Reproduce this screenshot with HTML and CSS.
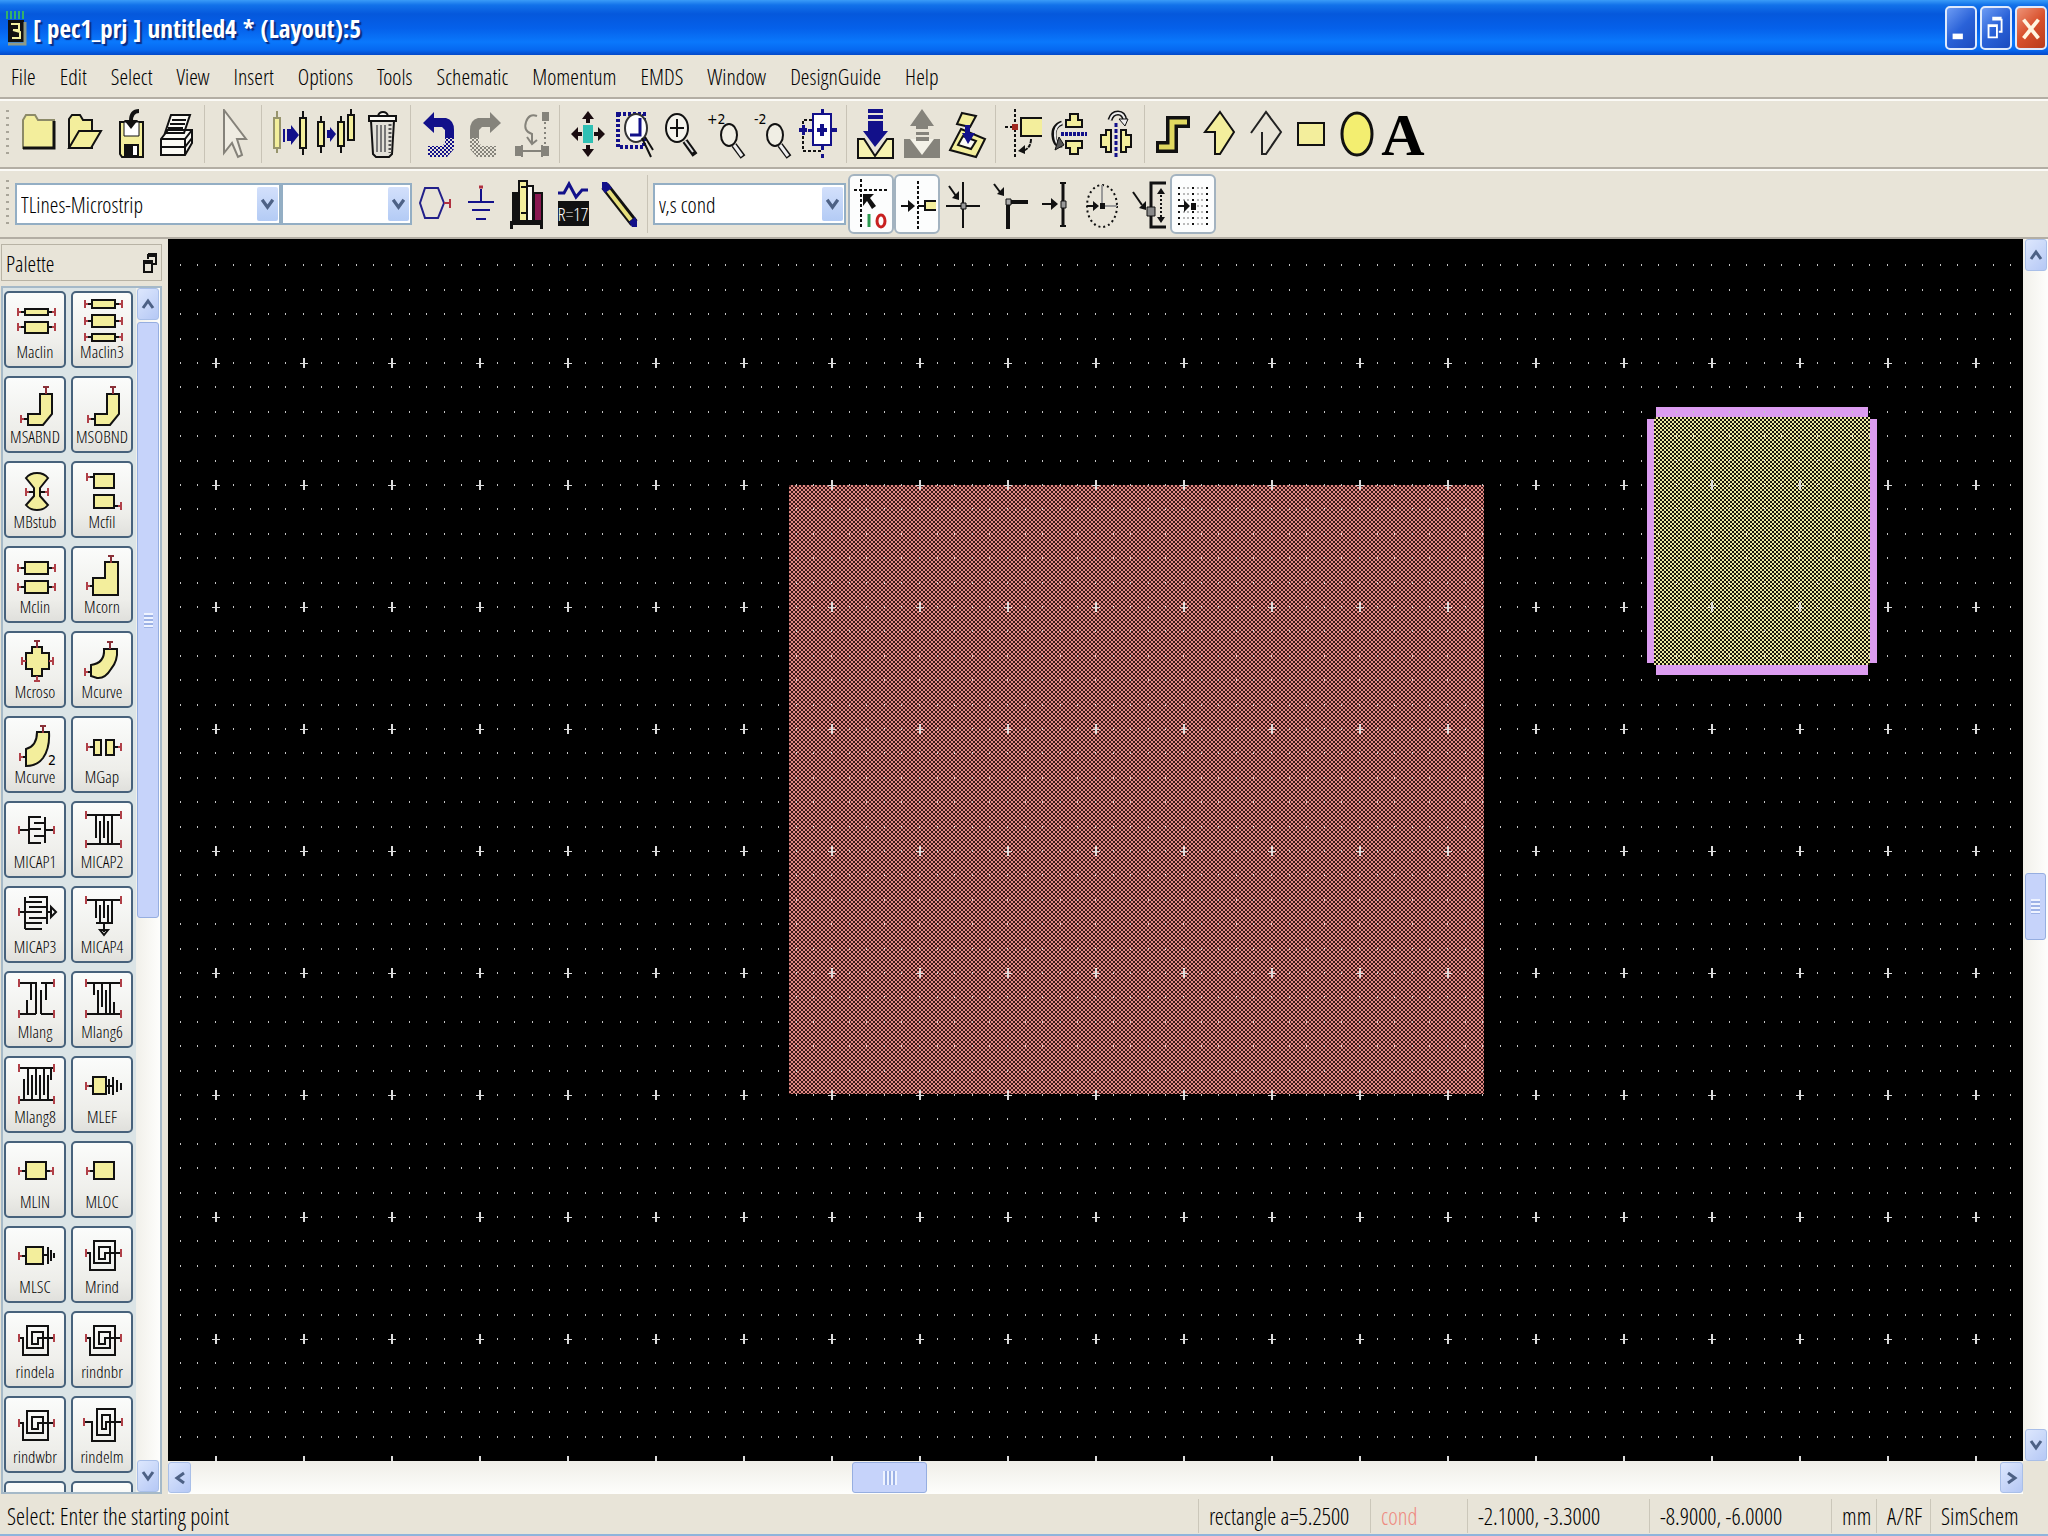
FILE: index.html
```html
<!DOCTYPE html>
<html lang="en">
<head>
    <meta charset="UTF-8">
    <meta name="viewport" content="width=device-width, initial-scale=1.0">
    <title>[ pec1_prj ] untitled4 * (Layout):5</title>
    <link rel="stylesheet" href="styles.css">
</head>
<body>
    <!-- shared symbols -->
    <svg class="defs" aria-hidden="true">
        <defs>
            <pattern id="navyDither" width="4" height="4" patternUnits="userSpaceOnUse"><path d="M0 0h2v2h-2zM2 2h2v2h-2z" fill="#12108a"/></pattern>
            <pattern id="grayDither" width="4" height="4" patternUnits="userSpaceOnUse"><path d="M0 0h2v2h-2zM2 2h2v2h-2z" fill="#85837b"/></pattern>
            <symbol id="portL" viewBox="0 0 8 8"><path d="M1 0v8M1 4h3" stroke="#b04048" stroke-width="2"/><path d="M4 4h4" stroke="#111" stroke-width="2"/></symbol>
            <symbol id="portR" viewBox="0 0 8 8"><path d="M7 0v8M7 4h-3" stroke="#b04048" stroke-width="2"/><path d="M4 4h-4" stroke="#111" stroke-width="2"/></symbol>
            <symbol id="portT" viewBox="0 0 8 8"><path d="M1 1h6M4 1v7" stroke="#8a3038" stroke-width="2" fill="none"/></symbol>
            <symbol id="chevron" viewBox="0 0 14 14"><path d="M2 3l5 7 5-7" fill="none" stroke="#4d6185" stroke-width="3"/></symbol>
            <symbol id="bend" viewBox="0 0 61 50"><path class="y" d="M35 17h12v20l-9 11H23V37h12z"/><use href="#portT" x="37" y="9" width="8" height="8"/><use href="#portL" x="15" y="38" width="8" height="8"/></symbol>
            <symbol id="spiral" viewBox="0 0 61 50"><path class="l" d="M14 26h4v17h25V14H22v22h16V20H27v12h6v-6h16"/><path class="r" d="M14 22v8M49 22v8"/></symbol>
        </defs>
    </svg>

    <header class="title-bar">
        <svg class="app-icon" width="22" height="40" viewBox="0 0 22 40"><path d="M2 3v8M6 3v8M10 3v8M14 3v8M18 3v8" stroke="#35b06a" stroke-width="2"/><rect x="3" y="12" width="16" height="22" fill="#111"/><path d="M6 16h8v6H8M8 22l7 2v6H7" fill="none" stroke="#f2f0a0" stroke-width="2"/><path d="M3 36h17V14" fill="none" stroke="#8f9a86" stroke-width="3"/></svg>
        <h1>[ pec1_prj ] untitled4 * (Layout):5</h1>
        <div class="window-btns">
            <button class="win-btn" aria-label="Minimize"><svg width="30" height="42" viewBox="0 0 30 42"><path d="M6 27h11v6H6z" fill="#fff"/></svg></button>
            <button class="win-btn" aria-label="Restore"><svg width="30" height="42" viewBox="0 0 30 42"><path d="M11 12h10v13h-3M11 10h10M7 19h9v12H7zM6 18h11" fill="none" stroke="#fff" stroke-width="2"/></svg></button>
            <button class="win-btn win-close" aria-label="Close"><svg width="30" height="42" viewBox="0 0 30 42"><path d="M7 12l16 20M23 12L7 32" stroke="#fff5e0" stroke-width="4"/></svg></button>
        </div>
    </header>

    <nav class="menu-bar">
        <a href="#">File</a>
        <a href="#">Edit</a>
        <a href="#">Select</a>
        <a href="#">View</a>
        <a href="#">Insert</a>
        <a href="#">Options</a>
        <a href="#">Tools</a>
        <a href="#">Schematic</a>
        <a href="#">Momentum</a>
        <a href="#">EMDS</a>
        <a href="#">Window</a>
        <a href="#">DesignGuide</a>
        <a href="#">Help</a>
    </nav>

    <!-- main toolbar -->
    <div class="toolbar">
        <span class="handle"></span>
        <button class="tool" aria-label="New"><svg viewBox="0 0 46 50"><path d="M8 39V11l3-5h9l3 5h16v28z" fill="#f3ee9c" stroke="#8c8a68" stroke-width="2"/><path d="M8 39h31V12" fill="none" stroke="#111" stroke-width="3"/></svg></button>
        <button class="tool" aria-label="Open"><svg viewBox="0 0 46 50"><path class="y" d="M8 38V10l3-4h8l3 5h9v28H8z"/><path class="y" d="M8 39l10-17h22L30 39z"/></svg></button>
        <button class="tool" aria-label="Save"><svg viewBox="0 0 46 50"><path class="y" d="M13 13h23v35H15l-2-3z"/><path d="M17 13h15v14H17z" fill="#fff" stroke="#111"/><path d="M17 35h15v12H17z" fill="#111"/><path d="M26 37h4v9h-4z" fill="#fff"/><path d="M32 2q-8 0-8 10" fill="none" stroke="#111" stroke-width="4"/><path d="M17 11h14l-7 9z" fill="#111"/></svg></button>
        <button class="tool" aria-label="Print"><svg viewBox="0 0 46 50"><path class="w" d="M8 30l7-9h24v13l-7 12H8zM18 6h19l-6 18H12z"/><path class="l" d="M19 11h14M17 15h15M15 19h15M8 30h24l7-9M32 30v16M8 38h24l7-9"/></svg></button>
        <span class="sep"></span>
        <button class="tool" aria-label="Pointer"><svg viewBox="0 0 46 50"><path d="M14 1l22 29h-9l5 16-4 2-6-14-8 10z" fill="#efece2" stroke="#85827a" stroke-width="2"/></svg></button>
        <span class="sep"></span>
        <button class="tool" aria-label="Copy"><svg viewBox="0 0 46 50"><path d="M10 2v42" stroke="#97946c" stroke-width="2"/><path d="M7 9h6v30H7z" fill="#f3ee9c" stroke="#97946c" stroke-width="2"/><path d="M36 2v44" class="l"/><path class="y" d="M33 9h6v30h-6z"/><path class="n" d="M16 20h2v13h-2zM20 20h4v-4l8 10-8 10v-4h-4z"/></svg></button>
        <button class="tool" aria-label="Copy multiple"><svg viewBox="0 0 46 50"><path class="l" d="M8 7v37M28 7v37M38 0v32"/><path class="y" d="M5 13h6v24H5zM25 13h6v24h-6zM35 6h6v25h-6z"/><path class="n" d="M14 21h3v-3l6 7-6 8v-4h-3z"/></svg></button>
        <button class="tool" aria-label="Delete"><svg viewBox="0 0 46 50"><path d="M12 12h23l-2 33-3 3H17l-3-3z" fill="#e2e0d8" stroke="#111" stroke-width="2"/><path class="w" d="M10 7h27v5H10zM19 7q1-4 5-4t5 4"/><path d="M18 16v27M22 16v27M26 16v27" stroke="#777" stroke-width="2"/><path d="M31 15v29" stroke="#555" stroke-width="3" stroke-dasharray="2"/></svg></button>
        <span class="sep"></span>
        <button class="tool" aria-label="Undo"><svg viewBox="0 0 46 50"><path class="n" d="M7 14L18 3v6h12q8 2 8 12v8h-9v-8l-3-3h-8v6z"/><path d="M29 28h9v12l-7 8H12V37h14l3-3z" fill="url(#navyDither)"/></svg></button>
        <button class="tool" aria-label="Redo"><svg viewBox="0 0 46 50"><path d="M39 14L28 3v6H16q-8 2-8 12v8h9v-8l3-3h8v6z" fill="#85837b"/><path d="M17 28H8v12l7 8h19V37H20l-3-3z" fill="url(#grayDither)"/></svg></button>
        <button class="tool" aria-label="Edit vertex"><svg viewBox="0 0 46 50"><g fill="none" stroke="#85837b" stroke-width="2"><path d="M14 42h20M14 36v12M34 36v12"/><path d="M37 13v24" stroke-dasharray="2 3"/><path d="M29 7q-8-3-11 6t6 12v9M19 28l5 7 5-4"/></g><path d="M34 3h7v9h-7zM7 37h7v10H7zM34 37h7v10h-7z" fill="#85837b"/></svg></button>
        <span class="sep"></span>
        <button class="tool" aria-label="Pan"><svg viewBox="0 0 46 50"><path d="M18 16h10v18H18z" fill="#2fc0b4"/><path d="M23 2l6 8h-4v4h-4v-4h-4zM23 48l6-8h-4v-4h-4v4h-4zM6 25l7-7v5h4v4h-4v5zM40 25l-7-7v5h-4v4h4v5z" fill="#1a0c10"/></svg></button>
        <button class="tool" aria-label="Zoom area"><svg viewBox="0 0 46 50"><path d="M7 5h26v33H7z" fill="none" stroke="#12108a" stroke-width="4" stroke-dasharray="3 2"/><ellipse cx="25" cy="19" rx="11" ry="14" fill="#fff" stroke="#333" stroke-width="2"/><path d="M19 26h10V9" fill="none" stroke="#12108a" stroke-width="3"/><path d="M31 29l9 19M34 28l8 13" class="l"/></svg></button>
        <button class="tool" aria-label="Zoom in"><svg viewBox="0 0 46 50"><path d="M28 32l10 14" stroke="#111" stroke-width="6"/><path d="M28 32l8 11" stroke="#ddd" stroke-width="2"/><ellipse cx="20" cy="19" rx="11" ry="14" fill="#f4f3ec" stroke="#111" stroke-width="2"/><path class="l" d="M13 19h14M20 10v18"/></svg></button>
        <button class="tool" aria-label="Zoom in 2x"><svg viewBox="0 0 46 50"><path d="M31 36l9 12" stroke="#111" stroke-width="6"/><path d="M31 36l8 11" stroke="#eee" stroke-width="3"/><ellipse cx="26" cy="26" rx="8" ry="11" fill="#f0eee4" stroke="#111" stroke-width="2"/><text x="4" y="15" class="t">+2</text></svg></button>
        <button class="tool" aria-label="Zoom out 2x"><svg viewBox="0 0 46 50"><path d="M31 36l9 12" stroke="#111" stroke-width="6"/><path d="M31 36l8 11" stroke="#eee" stroke-width="3"/><ellipse cx="26" cy="26" rx="8" ry="11" fill="#f0eee4" stroke="#111" stroke-width="2"/><text x="5" y="15" class="t">-2</text></svg></button>
        <button class="tool" aria-label="Center view"><svg viewBox="0 0 46 50"><path d="M17 11H8v31h19" fill="none" stroke="#111" stroke-width="2" stroke-dasharray="3 2"/><path d="M18 5h18v31H18z" fill="#fff" stroke="#12108a" stroke-width="2"/><path class="n" d="M26 0h3v5h-3zM26 37h3v4h-3zM26 45h3v4h-3zM4 19h8v4H4zM7 16h3v10H7zM13 20h4v3h-4zM36 19h6v4h-6zM22 19h10v4H22zM25 15h4v12h-4z"/></svg></button>
        <span class="sep"></span>
        <button class="tool" aria-label="Push into hierarchy"><svg viewBox="0 0 46 50"><path d="M6 30h6l11 17 12-17h6v19H6z" fill="#f6f2b0" stroke="#111" stroke-width="2"/><path class="n" d="M16 0h15v4H16zM16 6h15v4H16zM16 12h15v10h5L23 38 11 22h5z"/></svg></button>
        <button class="tool" aria-label="Pop out of hierarchy"><svg viewBox="0 0 46 50"><path d="M6 30h36v19H6z" fill="#85837b"/><path d="M12 30h24L24 46z" fill="#f4f2e8"/><path d="M24 0l12 17h-6v3H18v-3h-6zM18 23h13v3H18zM18 28h13v4H18z" fill="#85837b"/></svg></button>
        <button class="tool" aria-label="Insert component"><svg viewBox="0 0 46 50"><path class="y" d="M17 20l24 10-9 18L6 41z"/><path class="w" d="M19 27l13 5-5 8-13-4z"/><path class="y" d="M18 4l14 3-6 11-13-3z"/><path class="n" d="M21 16h5v8h5l-7 11-6-11h3z"/></svg></button>
        <span class="sep"></span>
        <button class="tool" aria-label="Rotate"><svg viewBox="0 0 46 50"><path d="M14 0v49M4 18h9" fill="none" stroke="#111" stroke-width="2" stroke-dasharray="3 2"/><path d="M20 9h21v18H20z" fill="#f3ee9c"/><path class="l" d="M41 9H20v18h21"/><path d="M11 15h6v6h-6z" fill="#a02820"/><path d="M30 30q0 9-8 12" fill="none" stroke="#111" stroke-width="2" stroke-dasharray="4 1"/><path d="M17 42l7-6v9z" fill="#111"/></svg></button>
        <button class="tool" aria-label="Mirror X"><svg viewBox="0 0 46 50"><path class="y" d="M19 18v-7h4V5h8v6h4v7zM19 32v7h4v6h8v-6h4v-7z"/><path d="M14 25h26" stroke="#12108a" stroke-width="4" stroke-dasharray="3 1"/><path d="M15 14q-9 3-8 13t8 9" fill="none" stroke="#111" stroke-width="5"/><path d="M15 14q-8 3-7 13t5 7" fill="none" stroke="#eee" stroke-width="2"/><path d="M8 41l9-5-5-8z" fill="#555" stroke="#111"/></svg></button>
        <button class="tool" aria-label="Mirror Y"><svg viewBox="0 0 46 50"><path class="y" d="M18 21h-5v5H8v12h5v5h5zM28 21h5v5h5v12h-5v5h-5z"/><path d="M23 14v35" stroke="#12108a" stroke-width="3" stroke-dasharray="4 2"/><path d="M17 11q2-7 8-7t7 8" fill="none" stroke="#111" stroke-width="5"/><path d="M17 11q2-7 8-7t7 8" fill="none" stroke="#eee" stroke-width="2"/><path d="M26 10h9l-3 7z" fill="#eee" stroke="#111"/></svg></button>
        <span class="sep"></span>
        <button class="tool" aria-label="Insert path"><svg viewBox="0 0 46 50"><path d="M6 38h16V13h18" fill="none" stroke="#111" stroke-width="12"/><path d="M9 38h13V13h15" fill="none" stroke="#e0d860" stroke-width="5"/></svg></button>
        <button class="tool" aria-label="Insert polygon"><svg viewBox="0 0 46 50"><path class="y" d="M24 3l14 20-14 22h-5V23H9z"/></svg></button>
        <button class="tool" aria-label="Insert polyline"><svg viewBox="0 0 46 50"><path d="M9 24L24 3l15 20-15 22h-4V23" fill="none" stroke="#222" stroke-width="2"/></svg></button>
        <button class="tool" aria-label="Insert rectangle"><svg viewBox="0 0 46 50"><path class="y" d="M10 14h26v22H10z"/></svg></button>
        <button class="tool" aria-label="Insert circle"><svg viewBox="0 0 46 50"><ellipse cx="23" cy="25" rx="15" ry="21" fill="#f3ee70" stroke="#111" stroke-width="3"/></svg></button>
        <button class="tool" aria-label="Insert text"><svg viewBox="0 0 46 50"><text x="23" y="46" class="big-a">A</text></svg></button>
    </div>

    <!-- component toolbar -->
    <div class="toolbar">
        <span class="handle"></span>
        <div class="combo combo-palette">
            <select aria-label="Component palette"><option>TLines-Microstrip</option></select>
            <svg class="arrow" viewBox="0 0 14 14"><use href="#chevron"/></svg>
        </div>
        <div class="combo combo-history">
            <select aria-label="Component history"><option></option></select>
            <svg class="arrow" viewBox="0 0 14 14"><use href="#chevron"/></svg>
        </div>
        <button class="tool" aria-label="Port"><svg viewBox="0 0 46 50"><path d="M8 24l5-15h13l6 15-6 15H13z" fill="none" stroke="#22208a" stroke-width="2"/><path d="M32 24h7M38 20v9" stroke="#b03040" stroke-width="2"/></svg></button>
        <button class="tool" aria-label="Ground"><svg viewBox="0 0 46 50"><path d="M23 10v12M10 23h26M14 31h18M18 40h10" stroke="#12108a" stroke-width="2"/><path d="M21 8h4" stroke="#b03040" stroke-width="3"/></svg></button>
        <button class="tool" aria-label="Component library"><svg viewBox="0 0 46 50"><path d="M6 42h33v8h-3v-4H9v4H6zM8 13h7v30H8z" fill="#111"/><path class="y" d="M15 2h8v40h-8z"/><path class="w" d="M23 7h6v35h-6z"/><path d="M17 8h5M17 34h5M10 17h3M10 36h3" stroke="#111" stroke-width="2"/><path d="M30 14h8v28h-8z" fill="#8a1850" stroke="#111" stroke-width="2"/></svg></button>
        <button class="tool" aria-label="Variables"><svg viewBox="0 0 46 50"><path d="M8 14h6l5-9 7 13 6-7h6" fill="none" stroke="#12108a" stroke-width="3"/><path d="M8 22h31v25H8z" fill="#111"/><text x="23" y="42" class="var">R=17</text></svg></button>
        <button class="tool" aria-label="Insert wire"><svg viewBox="0 0 46 50"><path d="M9 7l29 37" stroke="#111" stroke-width="9"/><path d="M11 10l24 31" stroke="#e6df7c" stroke-width="4"/><path class="n" d="M6 3h5l5 6-7 5-3-4zM41 48h-5l-3-5 6-5 2 4z"/></svg></button>
        <span class="sep"></span>
        <div class="combo combo-layer">
            <select aria-label="Entry layer"><option>v,s cond</option></select>
            <svg class="arrow" viewBox="0 0 14 14"><use href="#chevron"/></svg>
        </div>
        <button class="tool active" aria-label="Snap enabled" aria-pressed="true"><svg viewBox="0 0 46 50"><path d="M13 0v50M6 11h35" stroke="#111" stroke-width="2" stroke-dasharray="3 2"/><path d="M15 15h11l-4 4 6 8-4 3-5-8-4 5z" fill="#111"/><path d="M21 35v13" stroke="#2a9a50" stroke-width="3"/><ellipse cx="33" cy="42" rx="4" ry="6" fill="none" stroke="#c82020" stroke-width="3"/></svg></button>
        <button class="tool active" aria-label="Snap to pin" aria-pressed="true"><svg viewBox="0 0 46 50"><path d="M24 2v48" stroke="#111" stroke-width="2" stroke-dasharray="3 2"/><path d="M31 22h11v9H31z" fill="#f3ee9c"/><path class="l" d="M7 27h10M24 27h7M42 22H31v9h11"/><path d="M14 21l7 6-7 6z" fill="#111"/></svg></button>
        <button class="tool" aria-label="Snap to vertex"><svg viewBox="0 0 46 50"><path class="l" d="M23 3v46M6 27h34M9 7l7 10"/><path d="M19 21v-9l-7 7z" fill="#111"/><path d="M21 24h5v6h-5z" fill="#999" stroke="#111"/></svg></button>
        <button class="tool" aria-label="Snap to corner"><svg viewBox="0 0 46 50"><path d="M22 50V23h20" fill="none" stroke="#111" stroke-width="4"/><path class="l" d="M8 5l6 8"/><path d="M18 17V8l-7 7z" fill="#111"/><path d="M20 20h5v6h-5z" fill="#aaa" stroke="#111"/></svg></button>
        <button class="tool" aria-label="Snap to edge"><svg viewBox="0 0 46 50"><path d="M31 4v43" stroke="#111" stroke-width="3"/><path class="l" d="M28 4h6M28 47h6M10 25h11"/><path d="M19 19l7 6-7 6z" fill="#111"/><path d="M29 22h5v7h-5z" fill="#999" stroke="#111"/></svg></button>
        <button class="tool" aria-label="Snap to center"><svg viewBox="0 0 46 50"><ellipse cx="24" cy="27" rx="15" ry="21" fill="none" stroke="#111" stroke-width="2" stroke-dasharray="2 3"/><path d="M24 6v21h15" fill="none" stroke="#999" stroke-width="2"/><path class="l" d="M9 27h8"/><path d="M15 22l6 5-6 5zM22 24h5v6h-5z" fill="#111"/></svg></button>
        <button class="tool" aria-label="Snap to intersection"><svg viewBox="0 0 46 50"><path d="M42 4H27v44h15" fill="none" stroke="#111" stroke-width="3"/><path d="M37 12v30" stroke="#111" stroke-width="2" stroke-dasharray="2 2"/><path d="M33 15l4-6 4 6zM33 38l4 6 4-6z" fill="#111"/><path class="l" d="M9 13l9 13"/><path d="M22 31v-9l-7 7z" fill="#111"/><path d="M23 28h8v9h-8z" fill="#888" stroke="#111"/></svg></button>
        <button class="tool active" aria-label="Snap to grid" aria-pressed="true"><svg viewBox="0 0 46 50"><path d="M9 8v40M14 8v40M18 8v40M28 8v40M32 8v40M37 8v40" stroke="#777" stroke-width="1" stroke-dasharray="2 4"/><path d="M9 8v40M23 8v40M37 8v40" stroke="#111" stroke-width="2" stroke-dasharray="2 4"/><path class="l" d="M9 27h7"/><path d="M14 21l6 6-6 6zM21 24h5v7h-5z" fill="#111"/></svg></button>
    </div>

    <main class="content">
        <aside class="palette">
            <div class="palette-header">
                <h2>Palette</h2>
                <button class="dock-btn" aria-label="Undock"><svg width="14" height="22" viewBox="0 0 14 22"><path d="M5 2h8v10h-3M5 2v5M4 4h9M1 9h8v11H1zM1 11h8" fill="none" stroke="#111" stroke-width="2"/></svg></button>
            </div>
            <div class="palette-body">
                <div class="palette-list">
                    <button class="comp"><svg viewBox="0 0 61 50"><path class="y" d="M20 17h23v6H20zM20 30h23v11H20z"/><use href="#portL" x="12" y="16" width="8" height="8"/><use href="#portR" x="43" y="16" width="8" height="8"/><use href="#portL" x="12" y="31" width="8" height="8"/><use href="#portR" x="43" y="31" width="8" height="8"/></svg>Maclin</button>
                    <button class="comp"><svg viewBox="0 0 61 50"><path class="y" d="M20 8h23v8H20zM20 23h23v12H20zM20 42h23v7H20z"/><use href="#portL" x="12" y="8" width="8" height="8"/><use href="#portR" x="43" y="8" width="8" height="8"/><use href="#portL" x="12" y="25" width="8" height="8"/><use href="#portR" x="43" y="25" width="8" height="8"/><use href="#portL" x="12" y="41" width="8" height="8"/><use href="#portR" x="43" y="41" width="8" height="8"/></svg>Maclin3</button>
                    <button class="comp"><svg viewBox="0 0 61 50"><use href="#bend"/></svg>MSABND</button>
                    <button class="comp"><svg viewBox="0 0 61 50"><use href="#bend"/></svg>MSOBND</button>
                    <button class="comp"><svg viewBox="0 0 61 50"><path class="y" d="M21 16q4-5 11-5t11 5l-8 10v8l8 9q-4 5-11 5t-11-5l8-9v-8z"/><use href="#portL" x="20" y="26" width="8" height="8"/><use href="#portR" x="36" y="26" width="8" height="8"/></svg>MBstub</button>
                    <button class="comp"><svg viewBox="0 0 61 50"><path class="y" d="M22 12h20v14H22zM22 33h20v13H22z"/><use href="#portL" x="14" y="11" width="8" height="8"/><use href="#portR" x="42" y="40" width="8" height="8"/></svg>Mcfil</button>
                    <button class="comp"><svg viewBox="0 0 61 50"><path class="y" d="M20 15h23v12H20zM20 34h23v12H20z"/><use href="#portL" x="12" y="17" width="8" height="8"/><use href="#portR" x="43" y="17" width="8" height="8"/><use href="#portL" x="12" y="36" width="8" height="8"/><use href="#portR" x="43" y="36" width="8" height="8"/></svg>Mclin</button>
                    <button class="comp"><svg viewBox="0 0 61 50"><path class="y" d="M33 15h13v33H21V31h12z"/><use href="#portT" x="35" y="8" width="8" height="8"/><use href="#portL" x="14" y="35" width="8" height="8"/></svg>Mcorn</button>
                    <button class="comp"><svg viewBox="0 0 61 50"><path class="y" d="M27 15h10v6h7v16h-7v7H27v-7h-6V21h6z"/><use href="#portT" x="28" y="8" width="8" height="8"/><path class="r" d="M32 44v4M29 49h6"/><path class="r" d="M17 25v8M17 29h4M48 25v8M48 29h-4"/></svg>Mcroso</button>
                    <button class="comp"><svg viewBox="0 0 61 50"><path class="y" d="M32 17h13q1 12-6 20-6 10-14 9l-6-2V33q14-2 13-16z"/><use href="#portT" x="34" y="9" width="8" height="8"/><use href="#portL" x="12" y="36" width="8" height="8"/></svg>Mcurve</button>
                    <button class="comp"><svg viewBox="0 0 61 50"><path class="y" d="M32 15h12q1 16-6 26-6 8-17 8V32q11-3 11-17z"/><use href="#portT" x="34" y="8" width="8" height="8"/><use href="#portL" x="14" y="36" width="8" height="8"/><text x="43" y="48" class="t">2</text></svg>Mcurve</button>
                    <button class="comp"><svg viewBox="0 0 61 50"><path class="y" d="M22 23h7v15h-7zM34 23h8v15h-8z"/><use href="#portL" x="14" y="26" width="8" height="8"/><use href="#portR" x="42" y="26" width="8" height="8"/></svg>MGap</button>
                    <button class="comp"><svg viewBox="0 0 61 50"><path class="l" d="M14 28h9M40 28h9M24 14v28M23 15h13M23 27h13M23 41h13M40 15v26M29 21h11M29 34h11"/><path class="r" d="M14 24v8M49 24v8"/></svg>MICAP1</button>
                    <button class="comp"><svg viewBox="0 0 61 50"><path class="l" d="M15 13h34M15 42h34M24 13v23M28 19v23M32 13v23M36 19v23M40 13v29"/><path class="r" d="M14 9v8M49 9v8M14 38v8M49 38v8"/></svg>MICAP2</button>
                    <button class="comp"><svg viewBox="0 0 61 50"><path class="l" d="M14 25h6M20 10v32M24 10h18v27M20 15h17M24 20h18M20 25h17M24 31h18M20 36h17M20 42h17M42 25h4M46 20v10l5-5z"/><path class="r" d="M14 21v8"/></svg>MICAP3</button>
                    <button class="comp"><svg viewBox="0 0 61 50"><path class="l" d="M15 13h34M24 13v18M28 18v18M32 13v18M36 18v18M40 13v18M24 36h16V18M32 36v9M28 43h8l-4 5z"/><path class="r" d="M14 9v8M49 9v8"/></svg>MICAP4</button>
                    <button class="comp"><svg viewBox="0 0 61 50"><path class="l" d="M15 11h16v31M44 11h5M15 42h16M36 42h13M26 11v17M22 28v14M36 42V18M41 11v17M36 11h8"/><path class="r" d="M14 7v8M49 7v8M14 38v8M49 38v8"/></svg>Mlang</button>
                    <button class="comp"><svg viewBox="0 0 61 50"><path class="l" d="M15 11h34M15 42h34M22 11v12M26 18v24M30 11v24M34 18v24M38 11v31M42 30v12M30 11h12"/><path class="r" d="M14 7v8M49 7v8M14 38v8M49 38v8"/></svg>Mlang6</button>
                    <button class="comp"><svg viewBox="0 0 61 50"><path class="l" d="M15 11h34M15 43h34M19 22v21M23 11v27M27 18v25M31 11v27M35 18v25M39 11v27M43 18v25M46 11v12"/><path class="r" d="M14 7v8M49 7v8M14 39v8M49 39v8"/></svg>Mlang8</button>
                    <button class="comp"><svg viewBox="0 0 61 50"><path class="y" d="M21 20h13v17H21z"/><use href="#portL" x="13" y="25" width="8" height="8"/><path class="l" d="M34 29h8M37 22v15M41 20v18M45 23v12M49 26v7"/></svg>MLEF</button>
                    <button class="comp"><svg viewBox="0 0 61 50"><path class="y" d="M21 20h20v17H21z"/><use href="#portL" x="13" y="25" width="8" height="8"/><use href="#portR" x="41" y="25" width="8" height="8"/></svg>MLIN</button>
                    <button class="comp"><svg viewBox="0 0 61 50"><path class="y" d="M22 20h20v17H22z"/><use href="#portL" x="14" y="25" width="8" height="8"/></svg>MLOC</button>
                    <button class="comp"><svg viewBox="0 0 61 50"><path class="y" d="M21 20h17v17H21z"/><use href="#portL" x="13" y="25" width="8" height="8"/><path class="l" d="M38 28h5M43 20v17M46 23v11M49 26v5"/></svg>MLSC</button>
                    <button class="comp"><svg viewBox="0 0 61 50"><use href="#spiral"/></svg>Mrind</button>
                    <button class="comp"><svg viewBox="0 0 61 50"><use href="#spiral"/></svg>rindela</button>
                    <button class="comp"><svg viewBox="0 0 61 50"><use href="#spiral"/></svg>rindnbr</button>
                    <button class="comp"><svg viewBox="0 0 61 50"><use href="#spiral"/></svg>rindwbr</button>
                    <button class="comp"><svg viewBox="0 0 61 50"><path class="l" d="M12 25h8v19h23V12H25v26h13V18H30v14h4v-7h16"/><path class="r" d="M12 21v8M50 21v8"/></svg>rindelm</button>
                    <button class="comp" aria-label="More"></button>
                    <button class="comp" aria-label="More"></button>
                </div>
                <div class="scroll-v palette-scroll">
                    <button class="scroll-btn" aria-label="Scroll palette up"><svg class="up" width="14" height="14"><use href="#chevron"/></svg></button>
                    <div class="thumb grip-h"></div>
                    <div class="track-rest"></div>
                    <button class="scroll-btn" aria-label="Scroll palette down"><svg width="14" height="14"><use href="#chevron"/></svg></button>
                </div>
            </div>
        </aside>

        <section class="layout-view">
            <div class="workspace" id="workspace">
                <div class="shape-cond"></div>
                <div class="shape-selected"><div class="edge-x"></div><div class="edge-y"></div><div class="fill"></div></div>
                <canvas id="grid"></canvas>
            </div>
            <div class="scroll-v view-scroll">
                <button class="scroll-btn" aria-label="Scroll up"><svg class="up" width="14" height="14"><use href="#chevron"/></svg></button>
                <div class="track-before"></div>
                <div class="thumb grip-h"></div>
                <div class="track-after"></div>
                <button class="scroll-btn" aria-label="Scroll down"><svg width="14" height="14"><use href="#chevron"/></svg></button>
            </div>
            <div class="scroll-h">
                <button class="scroll-btn" aria-label="Scroll left"><svg class="left" width="14" height="14"><use href="#chevron"/></svg></button>
                <div class="track-before"></div>
                <div class="thumb grip-v"></div>
                <div class="track-after"></div>
                <button class="scroll-btn" aria-label="Scroll right"><svg class="right" width="14" height="14"><use href="#chevron"/></svg></button>
            </div>
        </section>
    </main>

    <footer class="status-bar">
        <span class="status-msg">Select: Enter the starting point</span>
        <span class="status-shape">rectangle a=5.2500</span>
        <span class="status-layer">cond</span>
        <span class="status-pos">-2.1000, -3.3000</span>
        <span class="status-pos">-8.9000, -6.0000</span>
        <span class="status-unit">mm</span>
        <span class="status-mode">A/RF</span>
        <span class="status-sim">SimSchem</span>
    </footer>

    <script src="script.js"></script>
</body>
</html>
```
FILE: styles.css
```css
* {
    box-sizing: border-box;
}

body {
    display: flex;
    flex-direction: column;
    height: 100vh;
    margin: 0;
    overflow: hidden;
    background-color: #e8e4d8;
    color: #000;
    font-family: "Open Sans Condensed Light", "Open Sans Condensed", "DejaVu Sans Condensed", "Liberation Sans", sans-serif;
    font-size: 22px;
    font-weight: 300;
}

button {
    margin: 0;
    padding: 0;
    border: none;
    background: none;
    color: inherit;
    font: inherit;
}

.defs {
    position: absolute;
    width: 0;
    height: 0;
}

/* icon paint */
.y {
    fill: #f3ee9c;
    stroke: #111;
    stroke-width: 2;
}

.w {
    fill: #fbfaf4;
    stroke: #111;
    stroke-width: 2;
}

.l {
    fill: none;
    stroke: #111;
    stroke-width: 2;
}

.r {
    fill: none;
    stroke: #b04048;
    stroke-width: 2;
}

.n {
    fill: #12108a;
}

.t {
    font-family: "DejaVu Sans Condensed", "DejaVu Sans", sans-serif;
    font-size: 14px;
    font-weight: normal;
}

.big-a {
    font-family: "Liberation Serif", serif;
    font-size: 60px;
    font-weight: bold;
    text-anchor: middle;
}

.var {
    fill: #fff;
    font-size: 19px;
    text-anchor: middle;
}

/* title bar */
.title-bar {
    display: flex;
    align-items: center;
    flex: none;
    height: 55px;
    padding: 0 1px 0 5px;
    background: linear-gradient(#3a9cf8 0, #1272ea 5px, #0558dc 14px, #0560ea 28px, #0a78fc 42px, #0668f0 50px, #0448c8 55px);
}

.title-bar h1 {
    flex: 1;
    margin: 0 0 0 6px;
    color: #fff;
    font-family: "Open Sans Condensed", "DejaVu Sans Condensed", sans-serif;
    font-size: 25px;
    font-weight: bold;
    line-height: 40px;
    text-shadow: 2px 2px 1px #0a2a80;
}

.window-btns {
    display: flex;
    gap: 3px;
}

.win-btn {
    display: flex;
    align-items: center;
    justify-content: center;
    width: 32px;
    height: 44px;
    border: 2px solid #dfeafc;
    border-radius: 5px;
    background: linear-gradient(135deg, #6d9cf4, #2a62d8 50%, #1c4cc0);
}

.win-close {
    background: linear-gradient(135deg, #ee9478, #d8502c 50%, #b83c1c);
}

/* menu */
.menu-bar {
    display: flex;
    align-items: center;
    flex: none;
    gap: 24px;
    height: 44px;
    padding: 0 11px;
    border-bottom: 2px solid #b3aea4;
}

.menu-bar a {
    color: inherit;
    line-height: 24px;
    text-decoration: none;
}

/* toolbars */
.toolbar {
    display: flex;
    align-items: center;
    flex: none;
    height: 70px;
    padding-left: 6px;
    border-top: 2px solid #fbfaf6;
    border-bottom: 2px solid #b3aea4;
}

.handle {
    width: 3px;
    height: 48px;
    margin-right: 6px;
    background: repeating-linear-gradient(#a9a599 0 2px, transparent 2px 7px);
}

.sep {
    width: 1px;
    height: 58px;
    margin: 0 5px;
    background-color: #c8c3b6;
}

.tool {
    display: flex;
    align-items: center;
    justify-content: center;
    flex: none;
    width: 46px;
    height: 60px;
}

.tool svg {
    flex: none;
    width: 46px;
    height: 50px;
}

.tool.active {
    border: 2px solid #a3b3c0;
    border-radius: 6px;
    background-color: #fcfdfd;
}

.combo {
    position: relative;
    height: 42px;
}

.combo select {
    width: 100%;
    height: 100%;
    padding: 0 32px 0 4px;
    border: 2px solid #93aec4;
    border-radius: 0;
    background-color: #fff;
    color: #000;
    font: inherit;
    appearance: none;
}

.combo .arrow {
    position: absolute;
    top: 4px;
    right: 3px;
    width: 21px;
    height: 34px;
    padding: 0 3px;
    border-radius: 2px;
    background: linear-gradient(#d3e0fb, #b3cbf5);
    pointer-events: none;
}

.combo-palette {
    width: 266px;
}

.combo-history {
    width: 131px;
}

.combo-layer {
    width: 193px;
    margin-right: 2px;
}

/* palette */
.content {
    display: flex;
    flex: 1;
    min-height: 0;
}

.palette {
    display: flex;
    flex-direction: column;
    width: 168px;
    padding: 5px 6px 0 1px;
}

.palette-header {
    display: flex;
    align-items: center;
    justify-content: space-between;
    height: 37px;
    margin-bottom: 5px;
    padding: 0 4px;
    border: 1px solid #b8b3a5;
}

.palette-header h2 {
    margin: 0;
    font-size: 22px;
    font-weight: inherit;
    line-height: 24px;
}

.dock-btn {
    display: flex;
}

.palette-body {
    display: flex;
    flex: 1;
    min-height: 0;
    border: 2px solid #a5b9c8;
    background-color: #dbe4e6;
}

.palette-list {
    display: grid;
    flex: 1;
    grid-template-columns: repeat(2, minmax(0, 1fr));
    grid-auto-rows: 77px;
    gap: 8px 5px;
    padding: 3px 3px 0 1px;
    overflow: hidden;
}

.comp {
    display: flex;
    flex-direction: column;
    align-items: center;
    border: 2px solid #47627c;
    border-radius: 5px;
    background: linear-gradient(#fbfcfb, #eeeeea 70%, #e0e0dc);
    font-size: 17px;
    line-height: 20px;
    white-space: nowrap;
}

.comp svg {
    flex: none;
    width: 61px;
    height: 50px;
    margin: -1px -2px 0;
}

/* scrollbars */
.scroll-v {
    display: flex;
    flex-direction: column;
    align-items: center;
    background: linear-gradient(90deg, #f1f0ea, #fefefc);
}

.scroll-h {
    display: flex;
    align-items: center;
    height: 33px;
    background: linear-gradient(#efeee8, #fefefc);
}

.scroll-btn {
    display: flex;
    align-items: center;
    justify-content: center;
    flex: none;
    width: 22px;
    height: 32px;
    border: 1px solid #a9bfe8;
    border-radius: 3px;
    background: linear-gradient(135deg, #dde7fd, #b5c8f5);
}

.up {
    transform: rotate(180deg);
}

.left {
    transform: rotate(90deg);
}

.right {
    transform: rotate(-90deg);
}

.thumb {
    border: 1px solid #96aee0;
    border-radius: 3px;
    background-color: #c6d3fa;
}

.grip-h,
.grip-v {
    display: flex;
    align-items: center;
    justify-content: center;
}

.grip-h::after {
    content: "";
    width: 9px;
    height: 15px;
    background: repeating-linear-gradient(#eef3ff 0 2px, #9db2e6 2px 4px);
}

.grip-v::after {
    content: "";
    width: 14px;
    height: 14px;
    background: repeating-linear-gradient(90deg, #eef3ff 0 2px, #9db2e6 2px 4px);
}

.palette-scroll {
    width: 24px;
    gap: 2px;
}

.palette-scroll .thumb {
    flex: 594;
    width: 22px;
}

.track-rest {
    flex: 538;
}

/* layout window */
.layout-view {
    display: grid;
    flex: 1;
    grid-template-columns: 1fr 25px;
    grid-template-rows: 1fr 33px;
    min-width: 0;
}

.workspace {
    position: relative;
    min-width: 0;
    min-height: 0;
    overflow: hidden;
    background-color: #000;
}

#grid {
    position: absolute;
    top: 0;
    left: 0;
}

.shape-cond {
    position: absolute;
    top: 246px;
    left: 621px;
    width: 695px;
    height: 609px;
    background: repeating-conic-gradient(#e28a84 0 25%, #3a1818 0 50%) 0 0 / 4px 4px;
}

.shape-selected {
    position: absolute;
    top: 168px;
    left: 1479px;
    width: 230px;
    height: 268px;
}

.shape-selected div {
    position: absolute;
}

.edge-x {
    inset: 0 9px;
    background-color: #dc9cf0;
}

.edge-y {
    inset: 12px 0;
    background-color: #dc9cf0;
}

.shape-selected .fill {
    inset: 10px 7px;
    background: repeating-conic-gradient(#ece8a0 0 25%, #16140c 0 50%) 0 0 / 4px 4px;
}

.view-scroll .thumb {
    width: 21px;
    height: 67px;
}

.view-scroll .track-before {
    flex: 600;
}

.view-scroll .track-after {
    flex: 487;
}

.scroll-h .scroll-btn {
    width: 23px;
    height: 31px;
}

.scroll-h .thumb {
    width: 75px;
    height: 31px;
}

.scroll-h .track-before {
    flex: 660;
}

.scroll-h .track-after {
    flex: 1071;
}

/* status bar */
.status-bar {
    display: flex;
    align-items: center;
    flex: none;
    height: 42px;
    padding: 4px 0 0 7px;
    border-bottom: 2px solid #8fb4dc;
    font-size: 23px;
}

.status-bar span {
    padding-left: 10px;
    border-left: 1px solid #cbc7ba;
    line-height: 34px;
    white-space: nowrap;
}

.status-bar .status-msg {
    flex: 1;
    padding-left: 0;
    border-left: none;
}

.status-shape {
    width: 172px;
}

.status-layer {
    width: 97px;
    color: #ee8a80;
}

.status-pos {
    width: 182px;
}

.status-unit {
    width: 45px;
}

.status-mode {
    width: 54px;
}

.status-sim {
    width: 118px;
}
```
FILE: script.js
```javascript
// grid spacing
const MAJOR_X = 88;
const MAJOR_Y = 122;
const ORIGIN_X = 47;
const ORIGIN_Y = 124;

function drawGrid() {
    const workspace = document.getElementById('workspace');
    const canvas = document.getElementById('grid');
    canvas.width = workspace.clientWidth;
    canvas.height = workspace.clientHeight;
    const ctx = canvas.getContext('2d');

    // minor dots
    ctx.fillStyle = '#c4c4c4';
    for (let i = -2; ORIGIN_X + i * MAJOR_X / 5 < canvas.width - 8; i++) {
        for (let j = -4; ORIGIN_Y + j * MAJOR_Y / 5 < canvas.height; j++) {
            const x = Math.round(ORIGIN_X + i * MAJOR_X / 5);
            const y = Math.round(ORIGIN_Y - 1 + j * MAJOR_Y / 5);
            ctx.fillRect(x, y, 1, 2);
        }
    }

    // major crosses
    ctx.fillStyle = '#dcdcdc';
    for (let x = ORIGIN_X; x < canvas.width; x += MAJOR_X) {
        for (let y = ORIGIN_Y; y < canvas.height + 5; y += MAJOR_Y) {
            ctx.fillRect(x - 3, y, 8, 1);
            ctx.fillRect(x, y - 5, 2, 10);
        }
    }
}

window.onload = drawGrid;
window.onresize = drawGrid;
```
